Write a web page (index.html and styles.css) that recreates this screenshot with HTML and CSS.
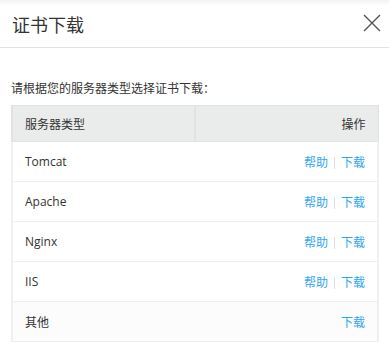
FILE: index.html
```html
<!DOCTYPE html>
<html lang="zh-CN">
<head>
  <meta charset="UTF-8">
  <title>证书下载</title>
  <link rel="stylesheet" href="styles.css">
</head>
<body>
  <div class="dialog">
    <div class="dialog-header">
      <span class="title">证书下载</span>
      <span class="close">
        <svg width="18" height="18" viewBox="0 0 18 18"><path d="M1 1L17 17M17 1L1 17" stroke="#555" stroke-width="1.4" fill="none"/></svg>
      </span>
    </div>
    <div class="dialog-body">
      <p class="tip">请根据您的服务器类型选择证书下载：</p>
      <table>
        <thead>
          <tr>
            <th class="col-type">服务器类型</th>
            <th class="col-op">操作</th>
          </tr>
        </thead>
        <tbody>
          <tr><td>Tomcat</td><td class="col-op"><a href="#">帮助</a><i class="sep"></i><a href="#">下载</a></td></tr>
          <tr><td>Apache</td><td class="col-op"><a href="#">帮助</a><i class="sep"></i><a href="#">下载</a></td></tr>
          <tr><td>Nginx</td><td class="col-op"><a href="#">帮助</a><i class="sep"></i><a href="#">下载</a></td></tr>
          <tr><td>IIS</td><td class="col-op"><a href="#">帮助</a><i class="sep"></i><a href="#">下载</a></td></tr>
          <tr class="last"><td>其他</td><td class="col-op"><a href="#">下载</a></td></tr>
        </tbody>
      </table>
    </div>
  </div>
</body>
</html>
```

FILE: styles.css
```css
* { box-sizing: border-box; margin: 0; padding: 0; }
body {
  background: #fff; width: 389px; height: 363px; overflow: hidden;
  font-family: "Open Sans", "Noto Sans CJK SC", sans-serif; color: #333;
}

/* Header */
.dialog-header {
  height: 48px; border-bottom: 1px solid #e1e1e1;
  display: flex; align-items: center; justify-content: space-between;
  padding: 0 8px 0 12px;
  background: linear-gradient(#f3f3f3, #fff 6px);
}
.dialog-header .title { font-size: 18px; color: #333; }
.dialog-header .close { display: flex; margin-top: -1px; }

/* Body */
.dialog-body { padding: 33px 10px 0 11px; }
.tip { font-size: 12px; line-height: 16px; color: #333; margin-bottom: 8px; }

table { width: 100%; border-collapse: collapse; font-size: 12px; }
th, td { text-align: left; border: 1px solid #eee; border-left: 2px solid #eee; padding: 0 12px; }
th { background: #eaebeb; height: 36px; font-weight: normal; color: #333; border-color: #e1e2e2; }
th.col-type { border-right: 1px solid #d9dada; }
td { height: 40px; border-left: 2px solid #f0f0f0; border-right: 2px solid #f0f0f0; }
td:first-child { border-right: none; }
td.col-op { border-left: none; }
.col-op { text-align: right; white-space: nowrap; }
tr.last td { background: #fcfcfc; }

.col-op a { color: #2da7f2; text-decoration: none; }
.sep {
  display: inline-block; width: 1px; height: 12px; background: #ddd;
  margin: 0 6px; vertical-align: -2px;
}
```
